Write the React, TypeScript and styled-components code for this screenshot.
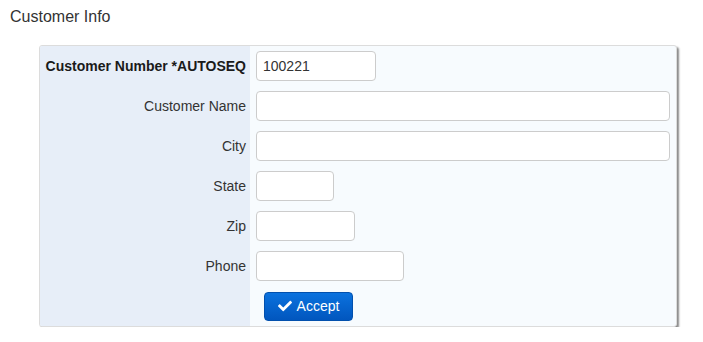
import React from "react";
import styled, { createGlobalStyle } from "styled-components";
import { FaCheck } from "react-icons/fa";

const Global = createGlobalStyle`
  html, body { margin: 0; padding: 0; background: #fff; }
  body { font-family: Arial, "Liberation Sans", sans-serif; color: #333; }
`;

const Page = styled.div`
  padding: 7px 0 0 10px;
`;

const Title = styled.h1`
  margin: 0;
  font-size: 16px;
  font-weight: normal;
  line-height: 20px;
  color: #333;
`;

const Panel = styled.div`
  margin: 18px 0 0 29px;
  width: 636px;
  border: 1px solid #dcdcdc;
  border-radius: 3px;
  box-shadow: 2px 2px 2px #8c8c8c;
  display: grid;
  grid-template-columns: 210px 1fr;
  background: #f7fbfe;
  overflow: hidden;
`;

const LabelCell = styled.div`
  background: #e7eef8;
  display: flex;
  align-items: center;
  justify-content: flex-end;
  padding-right: 4px;
  height: 40px;
  font-size: 14px;
  color: #333;
  font-weight: ${(p: { $bold?: boolean }) => (p.$bold ? "bold" : "normal")};
  ${(p: { $bold?: boolean }) => (p.$bold ? "color: #1a1a1a;" : "")}
`;

const FieldCell = styled.div`
  display: flex;
  align-items: center;
  padding: 0 6px;
  height: 40px;
`;

const Input = styled.input<{ $w: number }>`
  box-sizing: border-box;
  width: ${(p) => p.$w}px;
  height: 30px;
  border: 1px solid #ccc;
  border-radius: 4px;
  background: #fff;
  padding: 0 6px;
  font-family: Arial, "Liberation Sans", sans-serif;
  font-size: 14px;
  color: #333;
  outline: none;
`;

const Button = styled.button`
  box-sizing: border-box;
  margin-left: 8px;
  width: 89px;
  height: 29px;
  border: 1px solid #0250ad;
  border-radius: 4px;
  background: linear-gradient(#0b72de, #0156be);
  color: #fff;
  font-family: Arial, "Liberation Sans", sans-serif;
  font-size: 14px;
  display: flex;
  align-items: center;
  justify-content: center;
  gap: 5px;
  padding: 0;
  svg { width: 14px; height: 14px; }
`;

const rows: { label: string; w: number; value?: string; bold?: boolean }[] = [
  { label: "Customer Number *AUTOSEQ", w: 120, value: "100221", bold: true },
  { label: "Customer Name", w: 414 },
  { label: "City", w: 414 },
  { label: "State", w: 78 },
  { label: "Zip", w: 99 },
  { label: "Phone", w: 148 },
];

export default function App() {
  return (
    <>
      <Global />
      <Page>
        <Title>Customer Info</Title>
        <Panel>
          {rows.map((r) => (
            <React.Fragment key={r.label}>
              <LabelCell $bold={r.bold}>{r.label}</LabelCell>
              <FieldCell>
                <Input $w={r.w} defaultValue={r.value ?? ""} />
              </FieldCell>
            </React.Fragment>
          ))}
          <LabelCell />
          <FieldCell>
            <Button>
              <FaCheck />
              Accept
            </Button>
          </FieldCell>
        </Panel>
      </Page>
    </>
  );
}
